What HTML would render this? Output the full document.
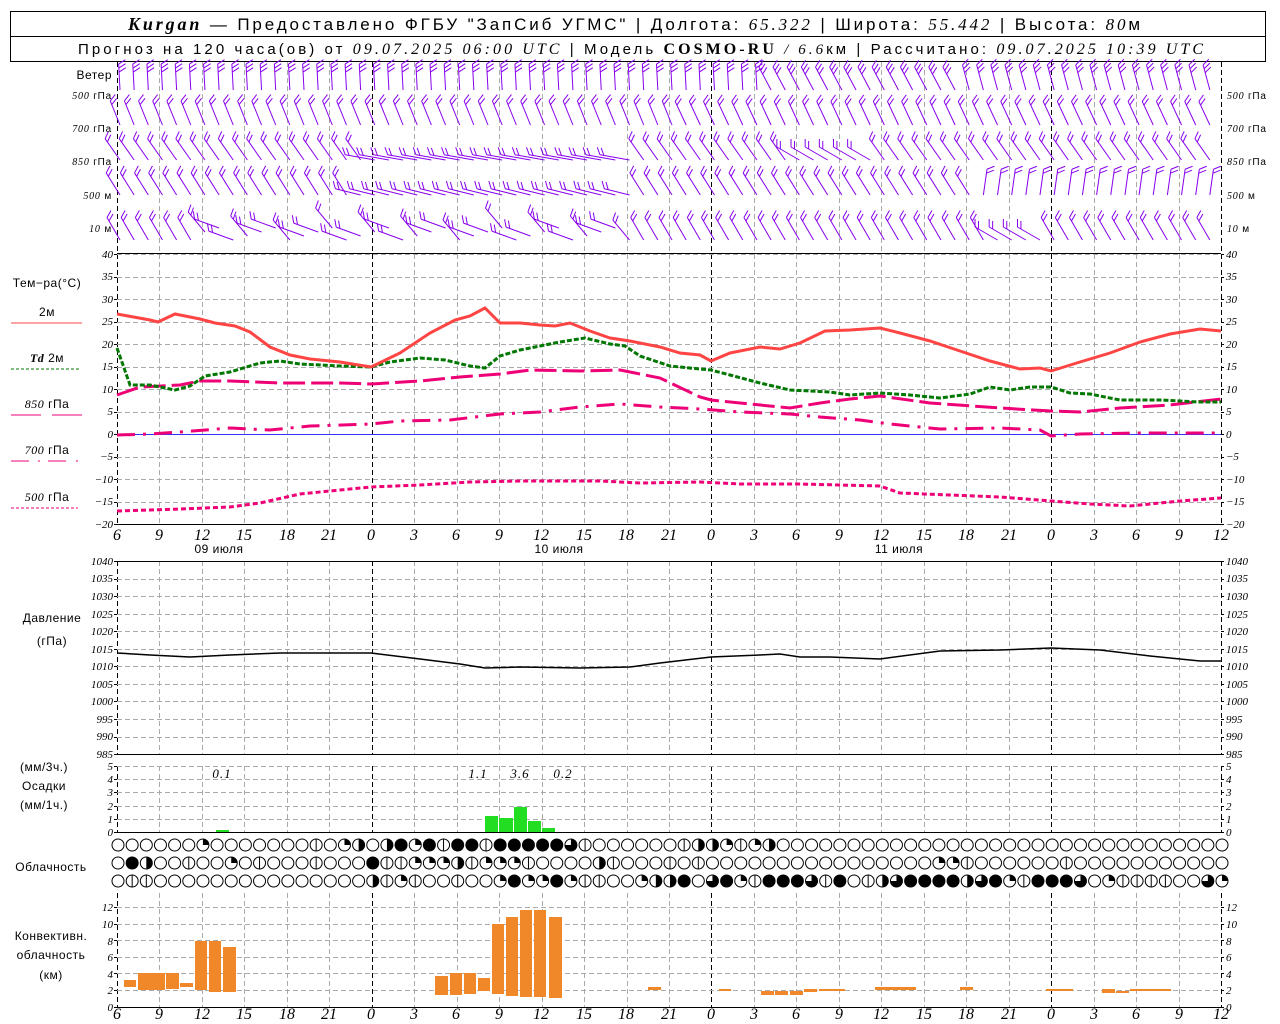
<!DOCTYPE html>
<html><head><meta charset="utf-8"><style>
html,body{margin:0;padding:0;background:#fff;width:1280px;height:1024px;overflow:hidden}
svg{display:block}
.s{font-family:"Liberation Sans",sans-serif;fill:#000}
.n{font-family:"Liberation Serif",serif;font-style:italic;fill:#000}
.tl{font-family:"Liberation Serif",serif;font-style:italic;font-size:11px;text-anchor:end}
.tr{font-family:"Liberation Serif",serif;font-style:italic;font-size:11px}
.xl{font-family:"Liberation Serif",serif;font-style:italic;font-size:16px;text-anchor:middle}
.lb{font-family:"Liberation Sans",sans-serif;font-size:12px;text-anchor:middle;letter-spacing:0.5px}
</style></head><body>
<svg id="g" width="1280" height="1024" xmlns="http://www.w3.org/2000/svg">
<rect x="10.5" y="11.5" width="1255" height="50" fill="none" stroke="#000"/>
<line x1="10" y1="36.5" x2="1265" y2="36.5" stroke="#000"/>
<text x="128" y="30" textLength="1012" lengthAdjust="spacing" class="s" font-size="17"><tspan class="n" font-weight="bold" font-size="18">Kurgan</tspan> — Предоставлено ФГБУ "ЗапСиб УГМС" | Долгота: <tspan class="n">65.322</tspan> | Широта: <tspan class="n">55.442</tspan> | Высота: <tspan class="n">80</tspan>м</text>
<text x="78" y="54" textLength="1125" lengthAdjust="spacing" class="s" font-size="15">Прогноз на 120 часа(ов) от <tspan class="n" font-size="16">09.07.2025 06:00 UTC</tspan>  | Модель <tspan font-family="Liberation Serif" font-weight="bold" font-size="16">COSMO-RU</tspan> <tspan class="n">/ 6.6</tspan>км | Рассчитано: <tspan class="n" font-size="16">09.07.2025 10:39 UTC</tspan></text>
<g id="grid"></g>
<g id="data"></g>
<text x="112" y="79" class="s" font-size="12" text-anchor="end" letter-spacing="0.5">Ветер</text>
<g font-size="10" letter-spacing="0.8">
<text x="112" y="99" class="s" text-anchor="end"><tspan class="n">500</tspan> гПа</text>
<text x="112" y="132" class="s" text-anchor="end"><tspan class="n">700</tspan> гПа</text>
<text x="112" y="165" class="s" text-anchor="end"><tspan class="n">850</tspan> гПа</text>
<text x="112" y="199" class="s" text-anchor="end"><tspan class="n">500</tspan> м</text>
<text x="112" y="232" class="s" text-anchor="end"><tspan class="n">10</tspan>   м</text>
<text x="1227" y="99" class="s"><tspan class="n">500</tspan> гПа</text>
<text x="1227" y="132" class="s"><tspan class="n">700</tspan> гПа</text>
<text x="1227" y="165" class="s"><tspan class="n">850</tspan> гПа</text>
<text x="1227" y="199" class="s"><tspan class="n">500</tspan> м</text>
<text x="1227" y="232" class="s"><tspan class="n">10</tspan>   м</text>
</g>
<text x="47" y="287" class="lb" font-size="13">Тем−ра(°С)</text>
<text x="47" y="316" class="lb" font-size="11">2м</text>
<line x1="11" y1="323" x2="82" y2="323" stroke="#f44"/>
<text x="47" y="362" class="lb" font-size="11"><tspan class="n" font-weight="bold">Td</tspan>  2м</text>
<line x1="11" y1="369" x2="79" y2="369" stroke="#070" stroke-dasharray="3,2"/>
<text x="47" y="408" class="lb" font-size="11"><tspan class="n">850</tspan>  гПа</text>
<line x1="11" y1="415" x2="41" y2="415" stroke="#e07"/><line x1="52" y1="415" x2="82" y2="415" stroke="#e07"/>
<text x="47" y="454" class="lb" font-size="11"><tspan class="n">700</tspan> гПа</text>
<path d="M11 461h18M38 461h2M48 461h18M76 461h2" stroke="#e07"/>
<text x="47" y="501" class="lb" font-size="11"><tspan class="n">500</tspan> гПа</text>
<line x1="11" y1="508" x2="78" y2="508" stroke="#e07" stroke-dasharray="3,2"/>
<text x="219" y="553" class="lb" font-size="13" letter-spacing="1">09 июля</text>
<text x="559" y="553" class="lb" font-size="13" letter-spacing="1">10 июля</text>
<text x="899" y="553" class="lb" font-size="13" letter-spacing="1">11 июля</text>
<text x="52" y="622" class="lb" font-size="13">Давление</text>
<text x="52" y="645" class="lb" font-size="13">(гПа)</text>
<text x="44" y="771" class="lb" font-size="13">(мм/3ч.)</text>
<text x="44" y="790" class="lb" font-size="13">Осадки</text>
<text x="44" y="809" class="lb" font-size="13">(мм/1ч.)</text>
<text x="51" y="871" class="lb" font-size="13">Облачность</text>
<text x="51" y="940" class="lb" font-size="12">Конвективн.</text>
<text x="51" y="959" class="lb" font-size="12">облачность</text>
<text x="51" y="979" class="lb" font-size="12">(км)</text>
<g class="n" font-size="13" text-anchor="middle" letter-spacing="1">
<text x="222" y="778">0.1</text><text x="478" y="778">1.1</text><text x="520" y="778">3.6</text><text x="563" y="778">0.2</text>
</g>
<g>
<text class="tl" x="113" y="258">40</text><text class="tl" x="113" y="280">35</text><text class="tl" x="113" y="303">30</text><text class="tl" x="113" y="325">25</text><text class="tl" x="113" y="348">20</text><text class="tl" x="113" y="370">15</text><text class="tl" x="113" y="393">10</text><text class="tl" x="113" y="415">5</text><text class="tl" x="113" y="438">0</text><text class="tl" x="113" y="460">−5</text><text class="tl" x="113" y="483">−10</text><text class="tl" x="113" y="505">−15</text><text class="tl" x="113" y="528">−20</text>
<text class="tr" x="1226" y="258">40</text><text class="tr" x="1226" y="280">35</text><text class="tr" x="1226" y="303">30</text><text class="tr" x="1226" y="325">25</text><text class="tr" x="1226" y="348">20</text><text class="tr" x="1226" y="370">15</text><text class="tr" x="1226" y="393">10</text><text class="tr" x="1226" y="415">5</text><text class="tr" x="1226" y="438">0</text><text class="tr" x="1226" y="460">−5</text><text class="tr" x="1226" y="483">−10</text><text class="tr" x="1226" y="505">−15</text><text class="tr" x="1226" y="528">−20</text>
</g>
<g>
<text class="tl" x="113" y="565">1040</text><text class="tl" x="113" y="582">1035</text><text class="tl" x="113" y="600">1030</text><text class="tl" x="113" y="618">1025</text><text class="tl" x="113" y="635">1020</text><text class="tl" x="113" y="653">1015</text><text class="tl" x="113" y="670">1010</text><text class="tl" x="113" y="688">1005</text><text class="tl" x="113" y="705">1000</text><text class="tl" x="113" y="723">995</text><text class="tl" x="113" y="740">990</text><text class="tl" x="113" y="758">985</text>
<text class="tr" x="1226" y="565">1040</text><text class="tr" x="1226" y="582">1035</text><text class="tr" x="1226" y="600">1030</text><text class="tr" x="1226" y="618">1025</text><text class="tr" x="1226" y="635">1020</text><text class="tr" x="1226" y="653">1015</text><text class="tr" x="1226" y="670">1010</text><text class="tr" x="1226" y="688">1005</text><text class="tr" x="1226" y="705">1000</text><text class="tr" x="1226" y="723">995</text><text class="tr" x="1226" y="740">990</text><text class="tr" x="1226" y="758">985</text>
</g>
<g>
<text class="tl" x="113" y="770">5</text><text class="tl" x="113" y="783">4</text><text class="tl" x="113" y="796">3</text><text class="tl" x="113" y="810">2</text><text class="tl" x="113" y="823">1</text><text class="tl" x="113" y="836">0</text>
<text class="tr" x="1226" y="770">5</text><text class="tr" x="1226" y="783">4</text><text class="tr" x="1226" y="796">3</text><text class="tr" x="1226" y="810">2</text><text class="tr" x="1226" y="823">1</text><text class="tr" x="1226" y="836">0</text>
</g>
<g>
<text class="tl" x="113" y="911">12</text><text class="tl" x="113" y="928">10</text><text class="tl" x="113" y="945">8</text><text class="tl" x="113" y="961">6</text><text class="tl" x="113" y="978">4</text><text class="tl" x="113" y="994">2</text><text class="tl" x="113" y="1011">0</text>
<text class="tr" x="1226" y="911">12</text><text class="tr" x="1226" y="928">10</text><text class="tr" x="1226" y="945">8</text><text class="tr" x="1226" y="961">6</text><text class="tr" x="1226" y="978">4</text><text class="tr" x="1226" y="994">2</text><text class="tr" x="1226" y="1011">0</text>
</g>
<g>
<text class="xl" x="117" y="540">6</text><text class="xl" x="159" y="540">9</text><text class="xl" x="202" y="540">12</text><text class="xl" x="244" y="540">15</text><text class="xl" x="287" y="540">18</text><text class="xl" x="329" y="540">21</text><text class="xl" x="371" y="540">0</text><text class="xl" x="414" y="540">3</text><text class="xl" x="456" y="540">6</text><text class="xl" x="499" y="540">9</text><text class="xl" x="541" y="540">12</text><text class="xl" x="584" y="540">15</text><text class="xl" x="626" y="540">18</text><text class="xl" x="669" y="540">21</text><text class="xl" x="711" y="540">0</text><text class="xl" x="754" y="540">3</text><text class="xl" x="796" y="540">6</text><text class="xl" x="839" y="540">9</text><text class="xl" x="881" y="540">12</text><text class="xl" x="924" y="540">15</text><text class="xl" x="966" y="540">18</text><text class="xl" x="1009" y="540">21</text><text class="xl" x="1051" y="540">0</text><text class="xl" x="1094" y="540">3</text><text class="xl" x="1136" y="540">6</text><text class="xl" x="1179" y="540">9</text><text class="xl" x="1221" y="540">12</text>
<text class="xl" x="117" y="1019">6</text><text class="xl" x="159" y="1019">9</text><text class="xl" x="202" y="1019">12</text><text class="xl" x="244" y="1019">15</text><text class="xl" x="287" y="1019">18</text><text class="xl" x="329" y="1019">21</text><text class="xl" x="371" y="1019">0</text><text class="xl" x="414" y="1019">3</text><text class="xl" x="456" y="1019">6</text><text class="xl" x="499" y="1019">9</text><text class="xl" x="541" y="1019">12</text><text class="xl" x="584" y="1019">15</text><text class="xl" x="626" y="1019">18</text><text class="xl" x="669" y="1019">21</text><text class="xl" x="711" y="1019">0</text><text class="xl" x="754" y="1019">3</text><text class="xl" x="796" y="1019">6</text><text class="xl" x="839" y="1019">9</text><text class="xl" x="881" y="1019">12</text><text class="xl" x="924" y="1019">15</text><text class="xl" x="966" y="1019">18</text><text class="xl" x="1009" y="1019">21</text><text class="xl" x="1051" y="1019">0</text><text class="xl" x="1094" y="1019">3</text><text class="xl" x="1136" y="1019">6</text><text class="xl" x="1179" y="1019">9</text><text class="xl" x="1221" y="1019">12</text>
</g>
</svg>
<script>
var NS="http://www.w3.org/2000/svg",G=document.getElementById('grid'),D=document.getElementById('data');
function el(p,t,a){var e=document.createElementNS(NS,t);for(var k in a)e.setAttribute(k,a[k]);p.appendChild(e);return e;}
var X0=117,X1=1221,DX=(X1-X0)/26;
var panels=[[62,252],[254,524],[561,754],[766,832],[893,1007]];
panels.forEach(function(p){
 for(var i=0;i<=26;i++){var x=Math.round(X0+DX*i)+.5;var day=(i==6||i==14||i==22);
  var edge=(i==0||i==26);
  el(G,'line',{x1:x,y1:p[0],x2:x,y2:p[1],stroke:(day||edge)?'#000':'#aaa','stroke-dasharray':'5,3'});}
});
function hg(y0,y1,step,n){for(var i=0;i<n;i++){var y=Math.round(y0+i*step)+.5;el(G,'line',{x1:X0,y1:y,x2:X1,y2:y,stroke:'#aaa','stroke-dasharray':'5,3'});
 el(G,'line',{x1:X0-3,y1:y,x2:X0,y2:y,stroke:'#000'});el(G,'line',{x1:X1,y1:y,x2:X1+3,y2:y,stroke:'#000'});}}
hg(254,0,22.5,13);hg(561,0,17.55,12);hg(766,0,13.2,6);hg(907,0,16.6,7);
[[253.5],[524.5],[561.5],[754.5],[832.5],[1007.5]].forEach(function(a){el(G,'line',{x1:X0,y1:a[0],x2:X1,y2:a[0],stroke:'#000'});});
el(G,'line',{x1:X0,y1:434.5,x2:X1,y2:434.5,stroke:'#33f'});
function poly(pts,col,w,dash){var s=pts.map(function(p){return p[0]+','+p[1]}).join(' ');var a={points:s,fill:'none',stroke:col,'stroke-width':w};if(dash)a['stroke-dasharray']=dash;el(D,'polyline',a);}
var T=[[117,314],[150,320],[158,322],[175,314],[200,319],[215,323],[235,326],[250,332],[270,347],[290,355],[310,359],[340,362],[371,367],[400,353],[430,333],[455,320],[470,316],[485,308],[500,323],[520,323],[540,325],[555,326],[570,323],[590,331],[610,338],[630,341],[660,347],[680,353],[700,355],[711,361],[730,353],[760,347],[780,349],[800,343],[825,331],[850,330],[880,328],[900,333],[930,341],[960,351],[990,361],[1020,369],[1040,368],[1051,371],[1080,362],[1110,353],[1140,342],[1170,334],[1200,329],[1221,331]];
var TD=[[117,348],[130,385],[150,385],[175,390],[190,386],[205,376],[230,372],[260,363],[280,361],[300,364],[340,366],[371,367],[390,362],[420,358],[445,360],[470,366],[485,368],[500,356],[520,350],[540,346],[560,342],[585,338],[610,344],[625,346],[640,356],[670,366],[700,369],[711,370],[730,375],[760,383],[790,390],[830,392],[850,395],[880,393],[910,395],[940,398],[970,394],[990,387],[1010,390],[1030,387],[1051,387],[1070,393],[1090,394],[1120,400],[1160,400],[1200,402],[1221,402]];
var P850=[[117,395],[140,387],[180,385],[200,381],[230,381],[280,383],[340,383],[371,384],[420,381],[460,377],[500,374],[530,370],[580,371],[620,370],[660,378],[700,397],[711,400],[740,403],[790,408],[820,403],[850,399],[880,396],[930,403],[1000,408],[1051,411],[1080,412],[1120,408],[1170,405],[1221,399]];
var P700=[[117,435],[150,434],[180,432],[230,428],[270,430],[310,426],[371,424],[400,421],[450,420],[500,414],[540,412],[580,407],[620,404],[660,407],[700,409],[740,412],[790,414],[820,417],[860,420],[890,424],[940,429],[1000,428],[1040,430],[1051,436],[1080,434],[1140,433],[1221,433]];
var P500=[[117,511],[180,509],[230,507],[260,503],[300,494],[340,490],[371,487],[420,485],[470,482],[520,481],[600,481],[640,483],[700,482],[740,484],[800,484],[880,486],[900,493],[950,495],[1000,497],[1051,501],[1090,504],[1130,506],[1180,501],[1221,498]];
poly(P500,'#e07',3,'5,3');poly(P700,'#e07',3,'18,8,3,8');poly(P850,'#e07',3,'22,6');poly(TD,'#070',3,'5,2');poly(T,'#f44',3);
poly([[117,653],[150,655],[190,657],[230,655],[280,653],[371,653],[420,659],[460,664],[485,668],[520,667],[580,668],[630,667],[660,663],[711,657],[760,655],[780,654],[800,657],[830,657],[880,659],[940,651],[1000,650],[1051,648],[1100,650],[1150,656],[1200,661],[1221,661]],'#000',1.5);
[[216,229,830],[485,498,816],[499,513,818],[514,527,807],[528,541,821],[542,555,828]].forEach(function(b){el(D,'rect',{x:b[0],y:b[2],width:b[1]-b[0],height:832-b[2],fill:'#2d2'});});
[[124,137,980,987],[138,166,973,990],[166,180,973,989],[180,194,983,987],[195,208,941,990],[209,222,941,992],[223,237,947,992],[435,449,976,995],[450,463,973,995],[464,477,973,994],[478,491,978,991],[492,505,924,994],[506,519,917,996],[520,533,910,997],[534,547,910,997],[549,563,917,998],[648,662,987,990],[719,732,989,991],[761,775,991,995],[775,789,991,995],[790,804,991,995],[804,818,989,992],[819,846,989,991],[875,917,987,990],[960,974,987,990],[1046,1074,989,991],[1102,1116,989,993],[1116,1130,991,993],[1130,1172,989,991]].forEach(function(b){el(D,'rect',{x:b[0],y:b[2],width:b[1]-b[0]-1,height:b[3]-b[2],fill:'#f0882a'});});
var CR=["ooooooqooooooovoqhohfqfvffvffffftvoooooovhhqvqhoooooooooooooooooooooooooooooooooo",
"ofhoovooqovooovooofvvqqqhvqqqvoooohvooovovooooooooooooooooqqvoooooovoooooooooooo",
"ovvooooooooooooooohvqvoovooqfqqfqvvooqhhfotfqvffftvfovhtffffhtfqvffftoqvvvvootqq"];
var cy=[845,863,881],DH=(X1-X0)/78;
CR.forEach(function(r,ri){for(var i=0;i<79;i++){var c=r[i]||'o',x=X0+1+DH*i,y=cy[ri],R=6;
 el(D,'circle',{cx:x,cy:y,r:R,fill:c=='f'?'#000':'#fff',stroke:'#000','stroke-width':1});
 if(c=='v')el(D,'line',{x1:x,y1:y-R,x2:x,y2:y+R,stroke:'#000'});
 if(c=='h')el(D,'path',{d:'M'+x+' '+(y-R)+'A'+R+' '+R+' 0 0 1 '+x+' '+(y+R)+'Z',fill:'#000'});
 if(c=='q')el(D,'path',{d:'M'+x+' '+y+'V'+(y-R)+'A'+R+' '+R+' 0 0 1 '+(x+R)+' '+y+'Z',fill:'#000'});
 if(c=='t')el(D,'path',{d:'M'+x+' '+y+'V'+(y-R)+'A'+R+' '+R+' 0 1 1 '+(x-R)+' '+y+'Z',fill:'#000'});
}});
function ang(row,i){
 if(row==0)return i<46?-3:(i<60?-28:-15);
 if(row==1)return i<40?-22:-25;
 if(row==2)return (i>=18&&i<37)?-80:(i>=48&&i<54?-60:-35);
 if(row==3)return (i>=17&&i<37)?-76:(i>=61?8:-32);
 return (i>=6&&i<37)?((i%3==0)?-40:-70):(i>=62&&i<66?-60:-30);
}
var base=[90,125,160,195,240],WL=26;
for(var row=0;row<5;row++)for(var i=0;i<78;i++){
 var x=X0+3+DH*i,th=ang(row,i)*Math.PI/180,L=(row==2&&i>=18&&i<37)?30:WL;
 var yb=base[row]-(row==4&&i>=6&&i<37?(i%4)*4:0);
 var tx=x+L*Math.sin(th),ty=yb-L*Math.cos(th);
 el(D,'line',{x1:x,y1:yb,x2:tx,y2:ty,stroke:'#80e','stroke-width':1});
 var nb=row==0?3:2;
 for(var b=0;b<nb;b++){var f=b*4/L,px=tx+(x-tx)*f,py=ty+(yb-ty)*f,a=th+Math.PI/3;
  el(D,'line',{x1:px,y1:py,x2:px+8*Math.sin(a),y2:py-8*Math.cos(a),stroke:'#80e','stroke-width':1});}
}
</script>
</body></html>
